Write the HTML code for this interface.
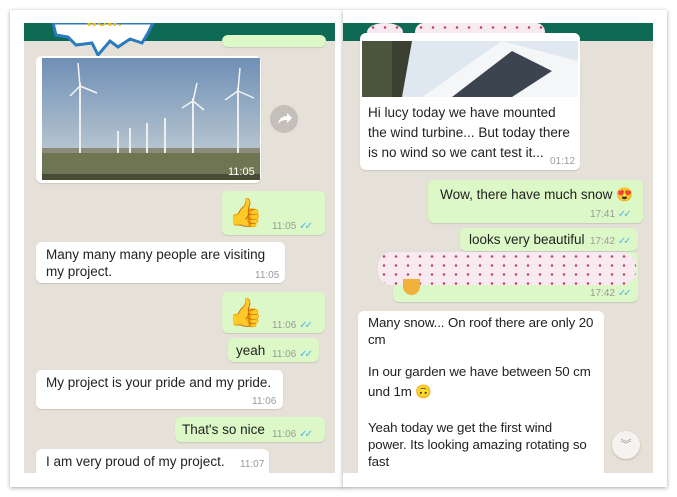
<!DOCTYPE html>
<html><head><meta charset="utf-8"><style>
*{margin:0;padding:0;box-sizing:border-box}
body{width:677px;height:497px;background:#fff;position:relative;overflow:hidden;font-family:"Liberation Sans",sans-serif;color:#222}
.card{position:absolute;background:#fff;box-shadow:0 1px 4px rgba(0,0,0,.35)}
.chat{position:absolute;background:#e6e1d8;overflow:hidden}
.hdr{position:absolute;left:0;right:0;top:0;height:18px;background:#0e6a55}
.b{position:absolute;border-radius:6px;font-size:13.5px;line-height:17px;box-shadow:0 1px 1px rgba(0,0,0,.12)}
.w{background:#fff}
.g{background:#dcf8c6}
.t{position:absolute;font-size:10px;color:#999}
.tk{color:#4fb6ec;font-size:10px;letter-spacing:-3px}
.ab{position:absolute}
.ln{position:absolute;left:10px;font-size:13.3px;white-space:nowrap;letter-spacing:-0.1px}
.pink{position:absolute;background-color:#f8eaf0;background-image:radial-gradient(circle,#c0405a 1px,transparent 1.5px);background-size:12px 9px;filter:blur(.3px)}
</style></head><body>
<div class="card" style="left:10px;top:10px;width:334px;height:477px"></div>
<div class="card" style="left:343px;top:10px;width:324px;height:477px"></div>

<!-- LEFT -->
<div class="chat" style="left:24px;top:23px;width:311px;height:450px">
  <div class="hdr"></div>
  <div class="b g" style="left:198px;top:12px;width:104px;height:12px"></div>
  <svg class="ab" style="left:24px;top:0" width="110" height="34" viewBox="0 0 110 34"><polygon points="5,0 105,0 100,10 94,20 82,16 70,24 62,18 50,32 44,20 28,22 20,14 8,12" fill="#fff" stroke="#2a7bbf" stroke-width="3"/><text x="38" y="3" font-size="12" font-weight="bold" fill="#f5c300" font-family="Liberation Sans">WOW!</text></svg>
  <div class="b w" style="left:12px;top:33px;width:225px;height:127px"></div>
  <svg class="ab" style="left:18px;top:35px" width="218" height="122"><defs><linearGradient id="sky" x1="0" y1="0" x2="0" y2="1"><stop offset="0" stop-color="#6f8fb6"/><stop offset="1" stop-color="#b8c6d0"/></linearGradient></defs><rect width="218" height="95" fill="url(#sky)"/><rect y="92" width="218" height="30" fill="#6f7552"/><rect y="90" width="218" height="5" fill="#8c8a7a"/>
  <g stroke="#eee" stroke-width="2" fill="none"><line x1="38" y1="25" x2="38" y2="95"/><line x1="196" y1="30" x2="196" y2="95"/><line x1="151" y1="40" x2="151" y2="95"/><line x1="123" y1="60" x2="123" y2="95"/><line x1="105" y1="65" x2="105" y2="95"/><line x1="88" y1="70" x2="88" y2="95"/><line x1="76" y1="73" x2="76" y2="95"/></g>
  <g stroke="#f4f4f4" stroke-width="1.5"><path d="M38 28 L36 5 M38 28 L55 35 M38 28 L28 38"/><path d="M196 33 L198 10 M196 33 L212 40 M196 33 L183 42"/><path d="M151 43 L155 25 M151 43 L162 52 M151 43 L140 50"/></g>
  <rect x="0" y="116" width="218" height="6" fill="rgba(0,0,0,.35)"/></svg>
  <div class="t" style="left:204px;top:143px;color:#fff;font-size:11px">11:05</div>
  <div class="ab" style="left:246px;top:82px;width:28px;height:28px;border-radius:50%;background:#c4c0b9"><svg width="28" height="28"><path d="M8 19 C9 13 13 11 17 11 L17 8 L22 13 L17 18 L17 15 C13 15 10 16 8 19Z" fill="#fff"/></svg></div>
  <div class="b g" style="left:198px;top:168px;width:103px;height:44px"></div>
  <div class="ab" style="left:204px;top:172px;font-size:28px;line-height:32px;font-family:'Noto Sans CJK SC',sans-serif">👍</div>
  <div class="t" style="left:248px;top:198px">11:05 <span class="tk">✓✓</span></div>
  <div class="b w" style="left:12px;top:219px;width:249px;height:41px;padding:4px 10px">Many many many people are visiting<br>my project.</div>
  <div class="t" style="left:231px;top:247px">11:05</div>
  <div class="b g" style="left:198px;top:269px;width:103px;height:41px"></div>
  <div class="ab" style="left:204px;top:272px;font-size:28px;line-height:32px;font-family:'Noto Sans CJK SC',sans-serif">👍</div>
  <div class="t" style="left:248px;top:297px">11:06 <span class="tk">✓✓</span></div>
  <div class="b g" style="left:204px;top:315px;width:91px;height:24px;padding:4px 8px">yeah</div>
  <div class="t" style="left:248px;top:326px">11:06 <span class="tk">✓✓</span></div>
  <div class="b w" style="left:12px;top:347px;width:247px;height:39px;padding:4px 10px">My project is your pride and my pride.</div>
  <div class="t" style="left:228px;top:373px">11:06</div>
  <div class="b g" style="left:151px;top:394px;width:150px;height:25px;padding:4px 7px">That's so nice</div>
  <div class="t" style="left:248px;top:406px">11:06 <span class="tk">✓✓</span></div>
  <div class="b w" style="left:12px;top:426px;width:233px;height:30px;padding:4px 10px">I am very proud of my project.</div>
  <div class="t" style="left:216px;top:436px">11:07</div>
</div>

<!-- RIGHT -->
<div class="chat" style="left:343px;top:23px;width:310px;height:450px">
  <div class="hdr"></div>
  <div class="pink" style="left:24px;top:0;width:36px;height:18px;border-radius:50%"></div>
  <div class="pink" style="left:72px;top:0;width:130px;height:18px;border-radius:9px"></div>
  <div class="b w" style="left:17px;top:10px;width:220px;height:137px"></div>
  <svg class="ab" style="left:19px;top:18px" width="216" height="56"><rect width="216" height="56" fill="#dfe7f0"/><polygon points="0,0 50,0 40,56 0,56" fill="#3b4030"/><polygon points="60,56 140,0 216,20 216,56" fill="#f4f6f8"/><polygon points="90,56 150,10 190,30 150,56" fill="#3c4450"/><rect x="0" y="0" width="30" height="56" fill="#59664a" opacity=".6"/></svg>
  <div class="ab" style="left:25px;top:80px;font-size:13.5px;line-height:20px;width:215px">Hi lucy today we have mounted<br>the wind turbine... But today there<br>is no wind so we cant test it...</div>
  <div class="t" style="left:207px;top:133px">01:12</div>
  <div class="b g" style="left:85px;top:157px;width:215px;height:43px;padding:5px 10px;text-align:right">Wow, there have much snow <span style="font-family:'Noto Sans CJK SC',sans-serif">😍</span></div>
  <div class="t" style="left:247px;top:186px">17:41 <span class="tk">✓✓</span></div>
  <div class="b g" style="left:117px;top:205px;width:178px;height:23px;padding:3px 9px">looks very beautiful</div>
  <div class="t" style="left:247px;top:213px">17:42 <span class="tk">✓✓</span></div>
  <div class="b g" style="left:50px;top:229px;width:245px;height:50px"></div>
  <div class="pink" style="left:35px;top:229px;width:258px;height:33px;border-radius:14px"></div>
  <div class="ab" style="left:60px;top:256px;width:17px;height:16px;border-radius:0 0 9px 9px;background:#f0b23a"></div>
  <div class="t" style="left:247px;top:265px">17:42 <span class="tk">✓✓</span></div>
  <div class="b w" style="left:15px;top:288px;width:246px;height:170px">
    <div class="ln" style="top:3px">Many snow... On roof there are only 20</div>
    <div class="ln" style="top:20px">cm</div>
    <div class="ln" style="top:52px">In our garden we have between 50 cm</div>
    <div class="ln" style="top:71px">und 1m <span style="font-family:'Noto Sans CJK SC',sans-serif">🙃</span></div>
    <div class="ln" style="top:108px">Yeah today we get the first wind</div>
    <div class="ln" style="top:125px">power. Its looking amazing rotating so</div>
    <div class="ln" style="top:142px">fast</div>
  </div>
  <div class="ab" style="left:269px;top:408px;width:28px;height:28px;border-radius:50%;background:#f4f3f0;box-shadow:0 1px 2px rgba(0,0,0,.2);color:#999;font-size:11px;text-align:center;line-height:28px">︾</div>
</div>
</body></html>
